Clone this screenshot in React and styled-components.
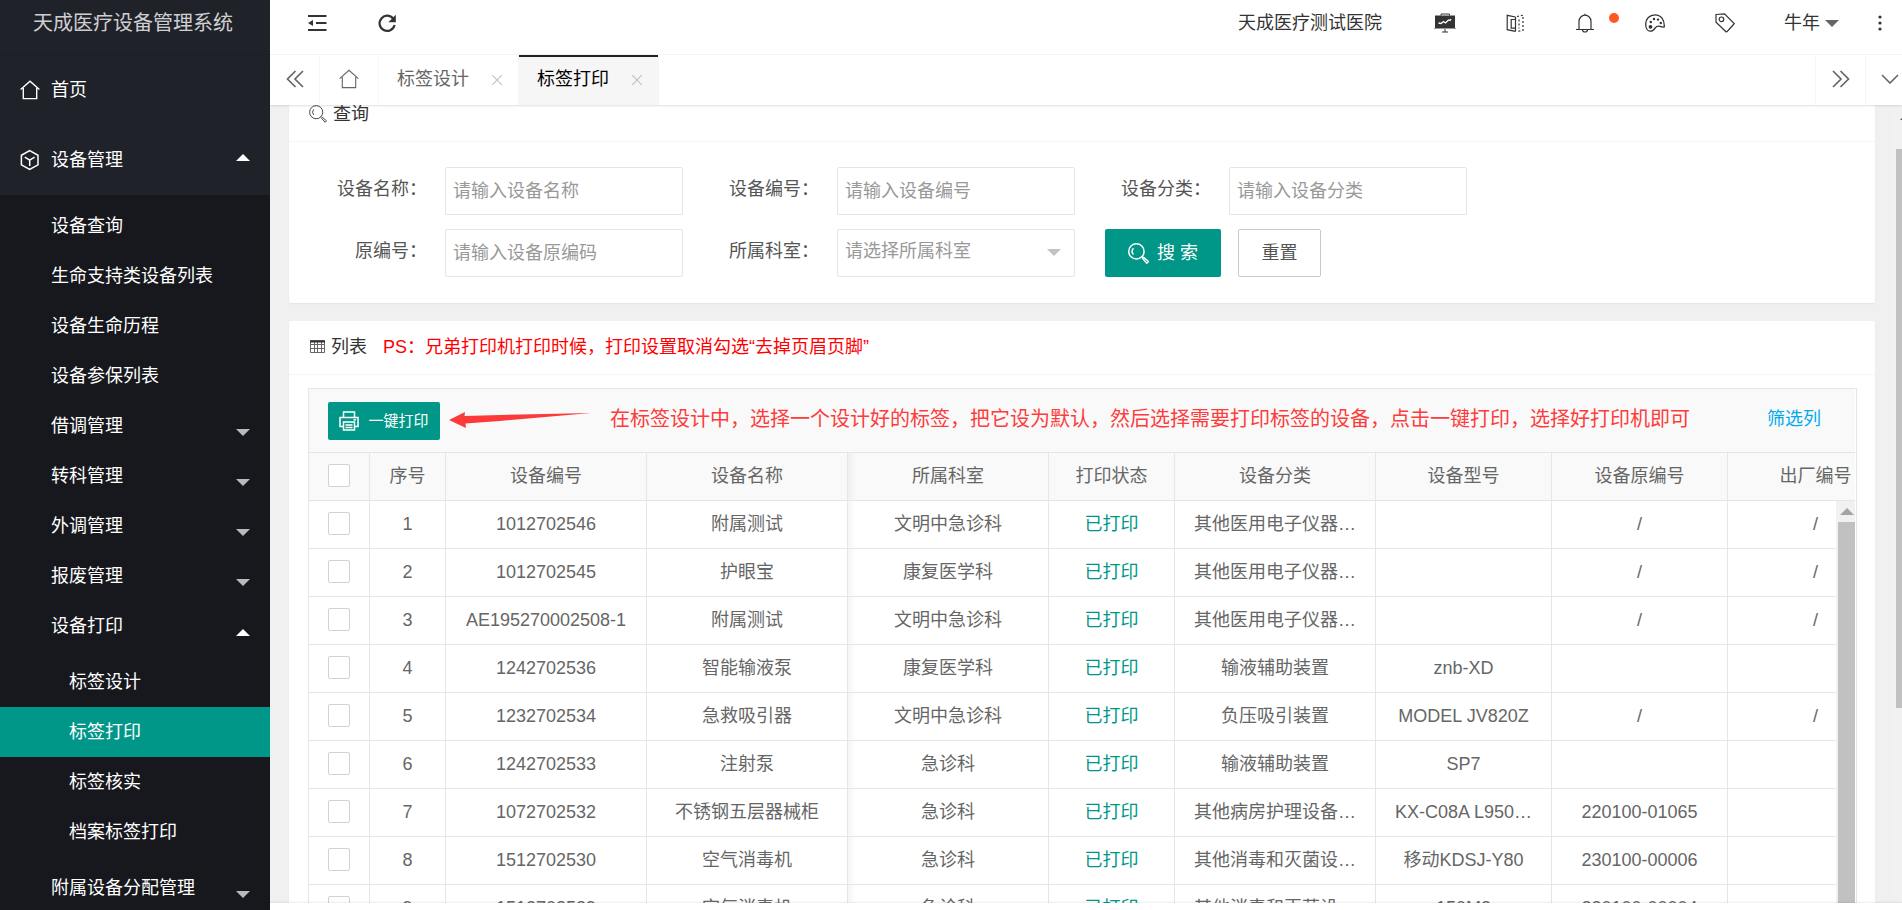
import React from "react";
import styled, { createGlobalStyle, css } from "styled-components";

const GlobalStyle = createGlobalStyle`
  *, *::before, *::after { box-sizing: border-box; }
  body {
    margin: 0;
    overflow: hidden;
    font-family: "Liberation Sans", "Noto Sans CJK SC", sans-serif;
    font-size: 18px;
    line-height: 24px;
    color: #333;
    background: #f0f0f0;
  }
  button, input, select { font: inherit; color: inherit; margin: 0; }
  button { cursor: pointer; }
  a { color: inherit; text-decoration: none; }
  svg { display: block; flex-shrink: 0; }
`;

const Page = styled.div`
  display: flex;
  height: 100vh;
`;

/* ---------- side menu ---------- */

const Sidebar = styled.aside`
  width: 270px;
  flex-shrink: 0;
  overflow: hidden;
  background: #20222a;
  color: #fff;
`;

const Brand = styled.div`
  height: 55px;
  padding: 0 4px 8px 0;
  display: flex;
  align-items: center;
  justify-content: center;
  font-size: 20px;
  color: rgba(255, 255, 255, 0.8);
  border-bottom: 1px solid #1d1f26;
`;

const MenuLink = styled.a`
  display: flex;
  align-items: center;
  justify-content: space-between;
  padding-right: 20px;
  height: ${(p) => (p.$level === 1 ? 70 : 50)}px;
  padding-left: ${(p) => ({ 1: 20, 2: 51, 3: 69 })[p.$level]}px;
  background: ${(p) => (p.$active ? "#009688" : "transparent")};
`;

const MenuLabel = styled.span`
  display: flex;
  align-items: center;
  gap: 11px;
`;

const SubMenu = styled.div`
  padding: 6px 0;
  background: ${(p) => (p.$nested ? "transparent" : "#17181d")};
`;

const Caret = styled.span`
  width: 0;
  height: 0;
  flex-shrink: 0;
  border: 7px solid transparent;
  ${(p) =>
    p.$up
      ? css`border-top-width: 0; border-bottom-color: ${p.$color};`
      : css`border-bottom-width: 0; border-top-color: ${p.$color};`}
  margin-top: ${(p) => p.$drop || 0}px;
  margin-bottom: ${(p) => p.$lift || 0}px;
`;

/* ---------- top bars ---------- */

const Main = styled.div`
  flex: 1;
  min-width: 0;
  display: flex;
  flex-direction: column;
`;

const TopBar = styled.header`
  height: 55px;
  flex-shrink: 0;
  display: flex;
  justify-content: space-between;
  background: #fff;
  border-bottom: 1px solid #f6f6f6;
  padding-bottom: 8px;
`;

const BarGroup = styled.div`
  display: flex;
  align-items: center;
`;

const BarTools = styled(BarGroup)`
  padding-left: 12px;
`;

const IconButton = styled.button`
  position: relative;
  width: ${(p) => p.$width || 70}px;
  height: 46px;
  padding: 0;
  border: 0;
  background: none;
  display: flex;
  align-items: center;
  justify-content: center;
`;

const Hospital = styled.a`
  padding-right: 28px;
`;

const Dot = styled.span`
  position: absolute;
  top: 13px;
  right: 1px;
  width: 10px;
  height: 10px;
  border-radius: 50%;
  background: #ff5722;
`;

const UserButton = styled.button`
  width: 98px;
  height: 46px;
  padding: 0 0 0 24px;
  border: 0;
  background: none;
  display: flex;
  align-items: center;
  gap: 5px;
`;

const TabBar = styled.nav`
  position: relative;
  z-index: 1;
  height: 50px;
  flex-shrink: 0;
  display: flex;
  background: #fff;
  color: #666;
  box-shadow: 0 1px 2px 0 rgba(0, 0, 0, 0.12);
`;

const TabControl = styled.button`
  width: ${(p) => p.$width}px;
  padding: 0 0 3px;
  border: 0 solid #f6f6f6;
  border-width: ${(p) => (p.$side === "left" ? "0 0 0 1px" : "0 1px 0 0")};
  background: none;
  color: inherit;
  display: flex;
  align-items: center;
  justify-content: center;
  flex-shrink: 0;
`;

const Tab = styled.div`
  width: 140px;
  padding: 0 16px 2px 18px;
  display: flex;
  align-items: center;
  justify-content: space-between;
  border-right: 1px solid #f6f6f6;
  ${(p) =>
    p.$active &&
    css`
      color: #000;
      background: #f6f6f6;
      box-shadow: inset 0 2px 0 #20222a;
    `}
`;

const CloseButton = styled.button`
  padding: 2px 0 0;
  border: 0;
  background: none;
  color: #c2c2c2;
`;

const Spacer = styled.div`
  flex: 1;
`;

/* ---------- content ---------- */

const Content = styled.main`
  position: relative;
  flex: 1;
  min-height: 0;
  overflow: hidden;
  padding: 0 27px 0 19px;
  display: flex;
  flex-direction: column;
  gap: 18px;
`;

const BottomStrip = styled.footer`
  position: relative;
  height: 7px;
  flex-shrink: 0;
  background: #fff;
  box-shadow: 0 -1px 2px rgba(0, 0, 0, 0.08);
`;

const Card = styled.section`
  flex-shrink: 0;
  background: #fff;
  border-radius: 2px;
  box-shadow: 0 1px 2px 0 rgba(0, 0, 0, 0.05);
`;

const CardHeader = styled.h2`
  margin: 0;
  height: ${(p) => (p.$clipped ? 37 : 54)}px;
  padding: ${(p) => (p.$clipped ? "0 20px 18px" : "0 20px 2px")};
  display: flex;
  align-items: center;
  gap: 6px;
  font-size: 18px;
  font-weight: 400;
  line-height: 18px;
  border-bottom: 1px solid #f6f6f6;
`;

const Notice = styled.span`
  padding-left: 10px;
  color: #f00;
`;

const SearchForm = styled.form`
  padding: 25px 2px 26px;
  display: flex;
  flex-direction: column;
  gap: 14px;
`;

const FormRow = styled.div`
  display: flex;
`;

const Field = styled.div`
  display: flex;
  align-items: center;
`;

const FieldLabel = styled.label`
  width: 154px;
  padding: 0 18px 4px 0;
  text-align: right;
  color: #555;
`;

const controlStyle = css`
  width: 238px;
  height: 48px;
  padding: 0 7px;
  border: 1px solid #e6e6e6;
  border-radius: 2px;
  background: #fff;
  outline: none;
`;

const TextInput = styled.input`
  ${controlStyle}
  &::placeholder { color: #999; opacity: 1; }
`;

const SelectWrap = styled.div`
  position: relative;
  display: flex;
`;

const SelectInput = styled.select`
  ${controlStyle}
  padding-bottom: 4px;
  appearance: none;
  color: #999;
`;

const SelectCaret = styled(Caret)`
  position: absolute;
  right: 14px;
  top: 20px;
  pointer-events: none;
`;

const Actions = styled.div`
  display: flex;
  gap: 17px;
  padding-left: 30px;
`;

const ActionButton = styled.button`
  height: 48px;
  border-radius: 2px;
  display: flex;
  align-items: center;
  justify-content: center;
  gap: 8px;
  ${(p) =>
    p.$primary
      ? css`width: 116px; border: 0; background: #009688; color: #fff;`
      : css`width: 83px; border: 1px solid #c9c9c9; background: #fff; color: #555;`}
`;

/* ---------- list ---------- */

const TableBox = styled.div`
  margin: 13px 18px 0 19px;
  border: 1px solid #e6e6e6;
  padding-right: 1px;
`;

const Toolbar = styled.div`
  height: 64px;
  padding: 0 34px 0 19px;
  display: flex;
  align-items: center;
  background: #f9f9f9;
  border-bottom: 1px solid #e6e6e6;
`;

const PrintButton = styled.button`
  width: 112px;
  height: 38px;
  padding: 0;
  border: 0;
  border-radius: 2px;
  background: #009688;
  color: #fff;
  font-size: 15px;
  display: flex;
  align-items: center;
  justify-content: center;
  gap: 9px;
`;

const Hint = styled.p`
  margin: 0;
  flex: 1;
  padding: 0 0 4px 9px;
  display: flex;
  align-items: center;
  gap: 18px;
  font-size: 20px;
  white-space: nowrap;
  color: #fd3c3c;
`;

const FilterLink = styled.a`
  padding-bottom: 4px;
  color: #01aaed;
`;

const TableView = styled.div`
  position: relative;
  overflow: hidden;
`;

const DataTable = styled.table`
  width: 1595px;
  table-layout: fixed;
  border-collapse: separate;
  border-spacing: 0;
  color: #666;
`;

const cellStyle = css`
  height: 48px;
  padding: 0 18px 2px;
  border: 0 solid #e6e6e6;
  border-width: 0 1px 1px 0;
  text-align: center;
  font-weight: 400;
  white-space: nowrap;
  overflow: hidden;
  ${(p) =>
    p.$edge &&
    css`
      background-image: linear-gradient(to right, rgba(0, 0, 0, 0.04), transparent);
      background-size: 8px 100%;
      background-repeat: no-repeat;
    `}
`;

const HeadCell = styled.th`
  ${cellStyle}
  background-color: #f9f9f9;
`;

const Cell = styled.td`
  ${cellStyle}
  color: ${(p) => (p.$status ? "#009688" : "inherit")};
`;

const Check = styled.input`
  appearance: none;
  display: block;
  width: 22px;
  height: 23px;
  && { margin: 0 auto; }
  border: 1px solid #d2d2d2;
  border-radius: 2px;
  background: #fff;
`;

const TableScroll = styled.div`
  position: absolute;
  top: 48px;
  right: 0;
  bottom: 0;
  width: 19px;
  padding-left: 2px;
  background: #f1f1f1;
  display: flex;
  flex-direction: column;
`;

const ScrollArrow = styled.div`
  height: 21px;
  display: flex;
  align-items: center;
  justify-content: center;
`;

const ScrollThumb = styled.div`
  flex: 1;
  background: #c1c1c1;
`;

const PageScroll = styled.div`
  position: absolute;
  top: 0;
  right: 0;
  bottom: 0;
  width: 9px;
  padding-left: 3px;
  overflow: hidden;
  background: #f1f1f1;
`;

const PageArrow = styled.div`
  height: 44px;
  padding: 11px 0 0 4px;
`;

const PageThumb = styled.div`
  height: 70%;
  background: #c1c1c1;
`;

/* ---------- icons ---------- */

const Svg = ({ w = 20, h = w, box = `0 0 ${w} ${h}`, sw = 1, children }) => (
  <svg width={w} height={h} viewBox={box} fill="none" stroke="currentColor" strokeWidth={sw} aria-hidden="true">
    {children}
  </svg>
);

const HomeIcon = ({ sw = 1.4 }) => (
  <Svg w={20} sw={sw}>
    <path d="M.6 9.6 10 1.3l9.400 8.300M3.300 8v10.600h13.400V8" />
  </Svg>
);

const CubeIcon = () => (
  <Svg w={20} h={22} sw={1.5}>
    <path d="M9.700 1.700 18 6.300v9.600l-8.300 4.500-8.300-4.500V6.300zM4.800 8.200l4.900 3 4.900-3M9.700 11.200V17" />
  </Svg>
);

const ShrinkIcon = () => (
  <Svg w={20} sw={2.2}>
    <path d="M1 3h18.500M9 10h10.500M1 17h18.500" />
    <path d="M6 7v6l-5-3z" fill="currentColor" stroke="none" />
  </Svg>
);

const RefreshIcon = () => (
  <Svg w={20} sw={2.2}>
    <path d="M16.600 6.200A7.600 7.600 0 1 0 17.600 12" />
    <path d="M18.800 1.800v7.400h-7.400z" fill="currentColor" stroke="none" />
  </Svg>
);

const BoardIcon = () => (
  <Svg w={22} h={20}>
    <path d="M7 2.500V1h8.500v1.500M11 16v3M8 19h6" />
    <path d="M1 2.500h20v12.500H1z" fill="currentColor" stroke="none" />
    <path d="M0 15.500h22" stroke="#999" />
    <path d="m4.500 10 2.500.500 2.500-2 2 1.500 3-3 1.500.500 1-1.500" stroke="#fff" strokeWidth="1.300" />
  </Svg>
);

const BookIcon = () => (
  <Svg w={18} h={18} sw={1.2}>
    <path d="M9.500 3 1.200 1.300v14.400l8.300 1.700M9.500 3v14.400M9.500 5.500H5.200v8.600h4.300" />
    <path d="M11 2.500 17 1.200v15.200l-6 1M13 5.500v9" strokeDasharray="2 2" />
  </Svg>
);

const BellIcon = () => (
  <Svg w={18} h={20} sw={1.200}>
    <path d="M3 16.300V8.200a6 6 0 0 1 12 0v8.100M0 16.500h18M9 2.200V.800M6.500 16.800a2.500 2.200 0 0 0 5 0" />
  </Svg>
);

const PaletteIcon = () => (
  <Svg w={20} h={18} sw={1.300}>
    <path d="M19.300 12.800c.300-7-3.300-12-9.300-12C4.500.800.700 5 .700 10c0 4 1.800 7.200 4.600 7.200 2.500 0 3.700-1.400 5.200-3.600 1.400-2 3-1.800 4.600-1.200 2 .800 3.900.800 4.200.400z" />
    <circle cx="5.500" cy="12.800" r="1.900" fill="currentColor" stroke="none" />
    <g fill="currentColor" stroke="none">
      <circle cx="5.800" cy="8" r="1.200" />
      <circle cx="9" cy="5" r="1.200" />
      <circle cx="13" cy="5.600" r="1.200" />
      <circle cx="15.800" cy="9" r="1.200" />
    </g>
  </Svg>
);

const TagIcon = () => (
  <Svg w={20} h={20} sw={1.200}>
    <path d="M1 1.500 9.500.800 19.200 10.500 18.500 11.500 12 18.600 11 18.800 1 9.200z" />
    <circle cx="6.500" cy="6.300" r="2.300" />
  </Svg>
);

const MoreIcon = () => (
  <svg width="4" height="16" viewBox="0 0 4 16" fill="#333" aria-hidden="true">
    <circle cx="2" cy="2" r="1.600" />
    <circle cx="2" cy="8" r="1.600" />
    <circle cx="2" cy="14" r="1.600" />
  </svg>
);

const DoubleChevron = ({ right }) => (
  <Svg w={18} sw={1.700}>
    <path d={right ? "m1 1 8 8-8 8M8.500 1l8 8-8 8" : "M9.500 1l-8 8 8 8M17 1 9 9l8 8"} />
  </Svg>
);

const DownIcon = () => (
  <Svg w={18} h={10} sw={1.600}>
    <path d="m1 1 8 8 8-8" />
  </Svg>
);

const CloseIcon = () => (
  <Svg w={10} sw={1.200}>
    <path d="m0 0 10 10M10 0 0 10" />
  </Svg>
);

const SearchIcon = ({ size = 18, sw = 1 }) => (
  <Svg w={size} box="0 0 20 20" sw={sw}>
    <circle cx="8" cy="8" r="7.300" />
    <path d="M5.200 5a4.500 4.500 0 0 0 0 6M13.300 12.800l1.200 1.200M14 14.800l1-1 4.500 3.800-1.600 1.600z" />
  </Svg>
);

const GridIcon = () => (
  <Svg w={16} h={13}>
    <path d="M1.500.500h14v12h-14zM1.500 4.500h14M1.500 8.500h14M5.500 2v10M8.500 2v10M12.500 2v10" stroke="#666" />
    <path d="M1 1.500h15" strokeWidth="2" />
  </Svg>
);

const PrinterIcon = () => (
  <Svg w={20} sw={1.500}>
    <path d="M4.500 6V1h11v5M4.500 15.500H1v-9h18v9h-3.500M4.500 11h11v8h-11zM6.500 14h7M6.500 16.500h7M14.500 8.800H17" />
  </Svg>
);

const ArrowGraphic = () => (
  <svg width="143" height="18" viewBox="0 0 143 18" fill="#fd3a3a" aria-hidden="true">
    <path d="M0 10 16 2 15.500 6 51 5 142 3 51 11 16.500 13.500 17 18z" />
  </svg>
);

/* ---------- data ---------- */

const columns = [
  { title: "序号", width: 76 },
  { title: "设备编号", width: 201 },
  { title: "设备名称", width: 201 },
  { title: "所属科室", width: 201, edge: true },
  { title: "打印状态", width: 126, status: true },
  { title: "设备分类", width: 201 },
  { title: "设备型号", width: 176 },
  { title: "设备原编号", width: 176 },
  { title: "出厂编号", width: 176 },
];

const rows = [
  ["1", "1012702546", "附属测试", "文明中急诊科", "已打印", "其他医用电子仪器…", "", "/", "/"],
  ["2", "1012702545", "护眼宝", "康复医学科", "已打印", "其他医用电子仪器…", "", "/", "/"],
  ["3", "AE195270002508-1", "附属测试", "文明中急诊科", "已打印", "其他医用电子仪器…", "", "/", "/"],
  ["4", "1242702536", "智能输液泵", "康复医学科", "已打印", "输液辅助装置", "znb-XD", "", ""],
  ["5", "1232702534", "急救吸引器", "文明中急诊科", "已打印", "负压吸引装置", "MODEL JV820Z", "/", "/"],
  ["6", "1242702533", "注射泵", "急诊科", "已打印", "输液辅助装置", "SP7", "", ""],
  ["7", "1072702532", "不锈钢五层器械柜", "急诊科", "已打印", "其他病房护理设备…", "KX-C08A L950…", "220100-01065", ""],
  ["8", "1512702530", "空气消毒机", "急诊科", "已打印", "其他消毒和灭菌设…", "移动KDSJ-Y80", "230100-00006", ""],
  ["9", "1512702529", "空气消毒机", "急诊科", "已打印", "其他消毒和灭菌设…", "150M3", "230100-00004", ""],
];

const deviceMenu = [
  { label: "设备查询" },
  { label: "生命支持类设备列表" },
  { label: "设备生命历程" },
  { label: "设备参保列表" },
  { label: "借调管理", group: true },
  { label: "转科管理", group: true },
  { label: "外调管理", group: true },
  { label: "报废管理", group: true },
  { label: "设备打印", group: true, children: ["标签设计", "标签打印", "标签核实", "档案标签打印"] },
  { label: "附属设备分配管理", group: true },
];

const TextField = ({ id, label, placeholder }) => (
  <Field>
    <FieldLabel htmlFor={id}>{label}：</FieldLabel>
    <TextInput id={id} placeholder={placeholder} />
  </Field>
);

const SideMenu = () => (
  <Sidebar>
    <Brand>天成医疗设备管理系统</Brand>
    <nav>
      <MenuLink href="#home" $level={1}>
        <MenuLabel><HomeIcon />首页</MenuLabel>
      </MenuLink>
      <MenuLink href="#device" $level={1}>
        <MenuLabel><CubeIcon />设备管理</MenuLabel>
        <Caret $up $color="#fff" $lift={6} />
      </MenuLink>
      <SubMenu>
        {deviceMenu.map((item) => (
          <React.Fragment key={item.label}>
            <MenuLink href="#item" $level={2}>
              {item.label}
              {item.group && (
                <Caret $up={!!item.children} $color={item.children ? "#fff" : "#bababb"} $drop={12} />
              )}
            </MenuLink>
            {item.children && (
              <SubMenu $nested>
                {item.children.map((child) => (
                  <MenuLink key={child} href="#item" $level={3} $active={child === "标签打印"}>
                    {child}
                  </MenuLink>
                ))}
              </SubMenu>
            )}
          </React.Fragment>
        ))}
      </SubMenu>
    </nav>
  </Sidebar>
);

const DeviceTable = () => (
  <TableView>
    <DataTable>
      <colgroup>
        <col style={{ width: 61 }} />
        {columns.map((c) => <col key={c.title} style={{ width: c.width }} />)}
      </colgroup>
      <thead>
        <tr>
          <HeadCell><Check type="checkbox" aria-label="全选" /></HeadCell>
          {columns.map((c) => <HeadCell key={c.title} $edge={c.edge}>{c.title}</HeadCell>)}
        </tr>
      </thead>
      <tbody>
        {rows.map((row) => (
          <tr key={row[0]}>
            <Cell><Check type="checkbox" aria-label={`选择 ${row[0]}`} /></Cell>
            {row.map((value, i) => (
              <Cell key={columns[i].title} $edge={columns[i].edge} $status={columns[i].status}>{value}</Cell>
            ))}
          </tr>
        ))}
      </tbody>
    </DataTable>
    <TableScroll>
      <ScrollArrow>
        <Caret $up $color="#a3a3a3" />
      </ScrollArrow>
      <ScrollThumb />
    </TableScroll>
  </TableView>
);

export default function App() {
  return (
    <Page>
      <GlobalStyle />
      <SideMenu />
      <Main>
        <TopBar>
          <BarTools>
            <IconButton aria-label="收起菜单"><ShrinkIcon /></IconButton>
            <IconButton aria-label="刷新"><RefreshIcon /></IconButton>
          </BarTools>
          <BarGroup>
            <Hospital href="#hospital">天成医疗测试医院</Hospital>
            <IconButton aria-label="大屏"><BoardIcon /></IconButton>
            <IconButton aria-label="手册"><BookIcon /></IconButton>
            <IconButton aria-label="消息"><BellIcon /><Dot /></IconButton>
            <IconButton aria-label="主题"><PaletteIcon /></IconButton>
            <IconButton aria-label="便签"><TagIcon /></IconButton>
            <UserButton>牛年<Caret $color="#666" /></UserButton>
            <IconButton aria-label="更多" $width={44}><MoreIcon /></IconButton>
          </BarGroup>
        </TopBar>
        <TabBar>
          <TabControl aria-label="向左" $width={50}><DoubleChevron /></TabControl>
          <TabControl aria-label="首页" $width={59}><HomeIcon sw={1.1} /></TabControl>
          <Tab>标签设计<CloseButton aria-label="关闭"><CloseIcon /></CloseButton></Tab>
          <Tab $active>标签打印<CloseButton aria-label="关闭"><CloseIcon /></CloseButton></Tab>
          <Spacer />
          <TabControl aria-label="向右" $side="left" $width={50}><DoubleChevron right /></TabControl>
          <TabControl aria-label="展开" $side="left" $width={37}>
            <MenuLabel><Spacer /><DownIcon /></MenuLabel>
          </TabControl>
        </TabBar>
        <Content>
          <Card>
            <CardHeader $clipped><SearchIcon />查询</CardHeader>
            <SearchForm>
              <FormRow>
                <TextField id="name" label="设备名称" placeholder="请输入设备名称" />
                <TextField id="code" label="设备编号" placeholder="请输入设备编号" />
                <TextField id="kind" label="设备分类" placeholder="请输入设备分类" />
              </FormRow>
              <FormRow>
                <TextField id="origin" label="原编号" placeholder="请输入设备原编码" />
                <Field>
                  <FieldLabel htmlFor="dept">所属科室：</FieldLabel>
                  <SelectWrap>
                    <SelectInput id="dept"><option>请选择所属科室</option></SelectInput>
                    <SelectCaret $color="#c2c2c2" />
                  </SelectWrap>
                </Field>
                <Actions>
                  <ActionButton type="button" $primary><SearchIcon size={21} sw={1.4} />搜 索</ActionButton>
                  <ActionButton type="reset">重置</ActionButton>
                </Actions>
              </FormRow>
            </SearchForm>
          </Card>
          <Card>
            <CardHeader>
              <GridIcon />列表
              <Notice>PS：兄弟打印机打印时候，打印设置取消勾选“去掉页眉页脚”</Notice>
            </CardHeader>
            <TableBox>
              <Toolbar>
                <PrintButton><PrinterIcon />一键打印</PrintButton>
                <Hint>
                  <ArrowGraphic />
                  在标签设计中，选择一个设计好的标签，把它设为默认，然后选择需要打印标签的设备，点击一键打印，选择好打印机即可
                </Hint>
                <FilterLink href="#columns">筛选列</FilterLink>
              </Toolbar>
              <DeviceTable />
            </TableBox>
          </Card>
          <PageScroll>
            <PageArrow>
              <svg width="8" height="4" viewBox="0 0 8 4" fill="#505050" aria-hidden="true">
                <path d="M0 4 4 0l4 4z" />
              </svg>
            </PageArrow>
            <PageThumb />
          </PageScroll>
        </Content>
        <BottomStrip />
      </Main>
    </Page>
  );
}
